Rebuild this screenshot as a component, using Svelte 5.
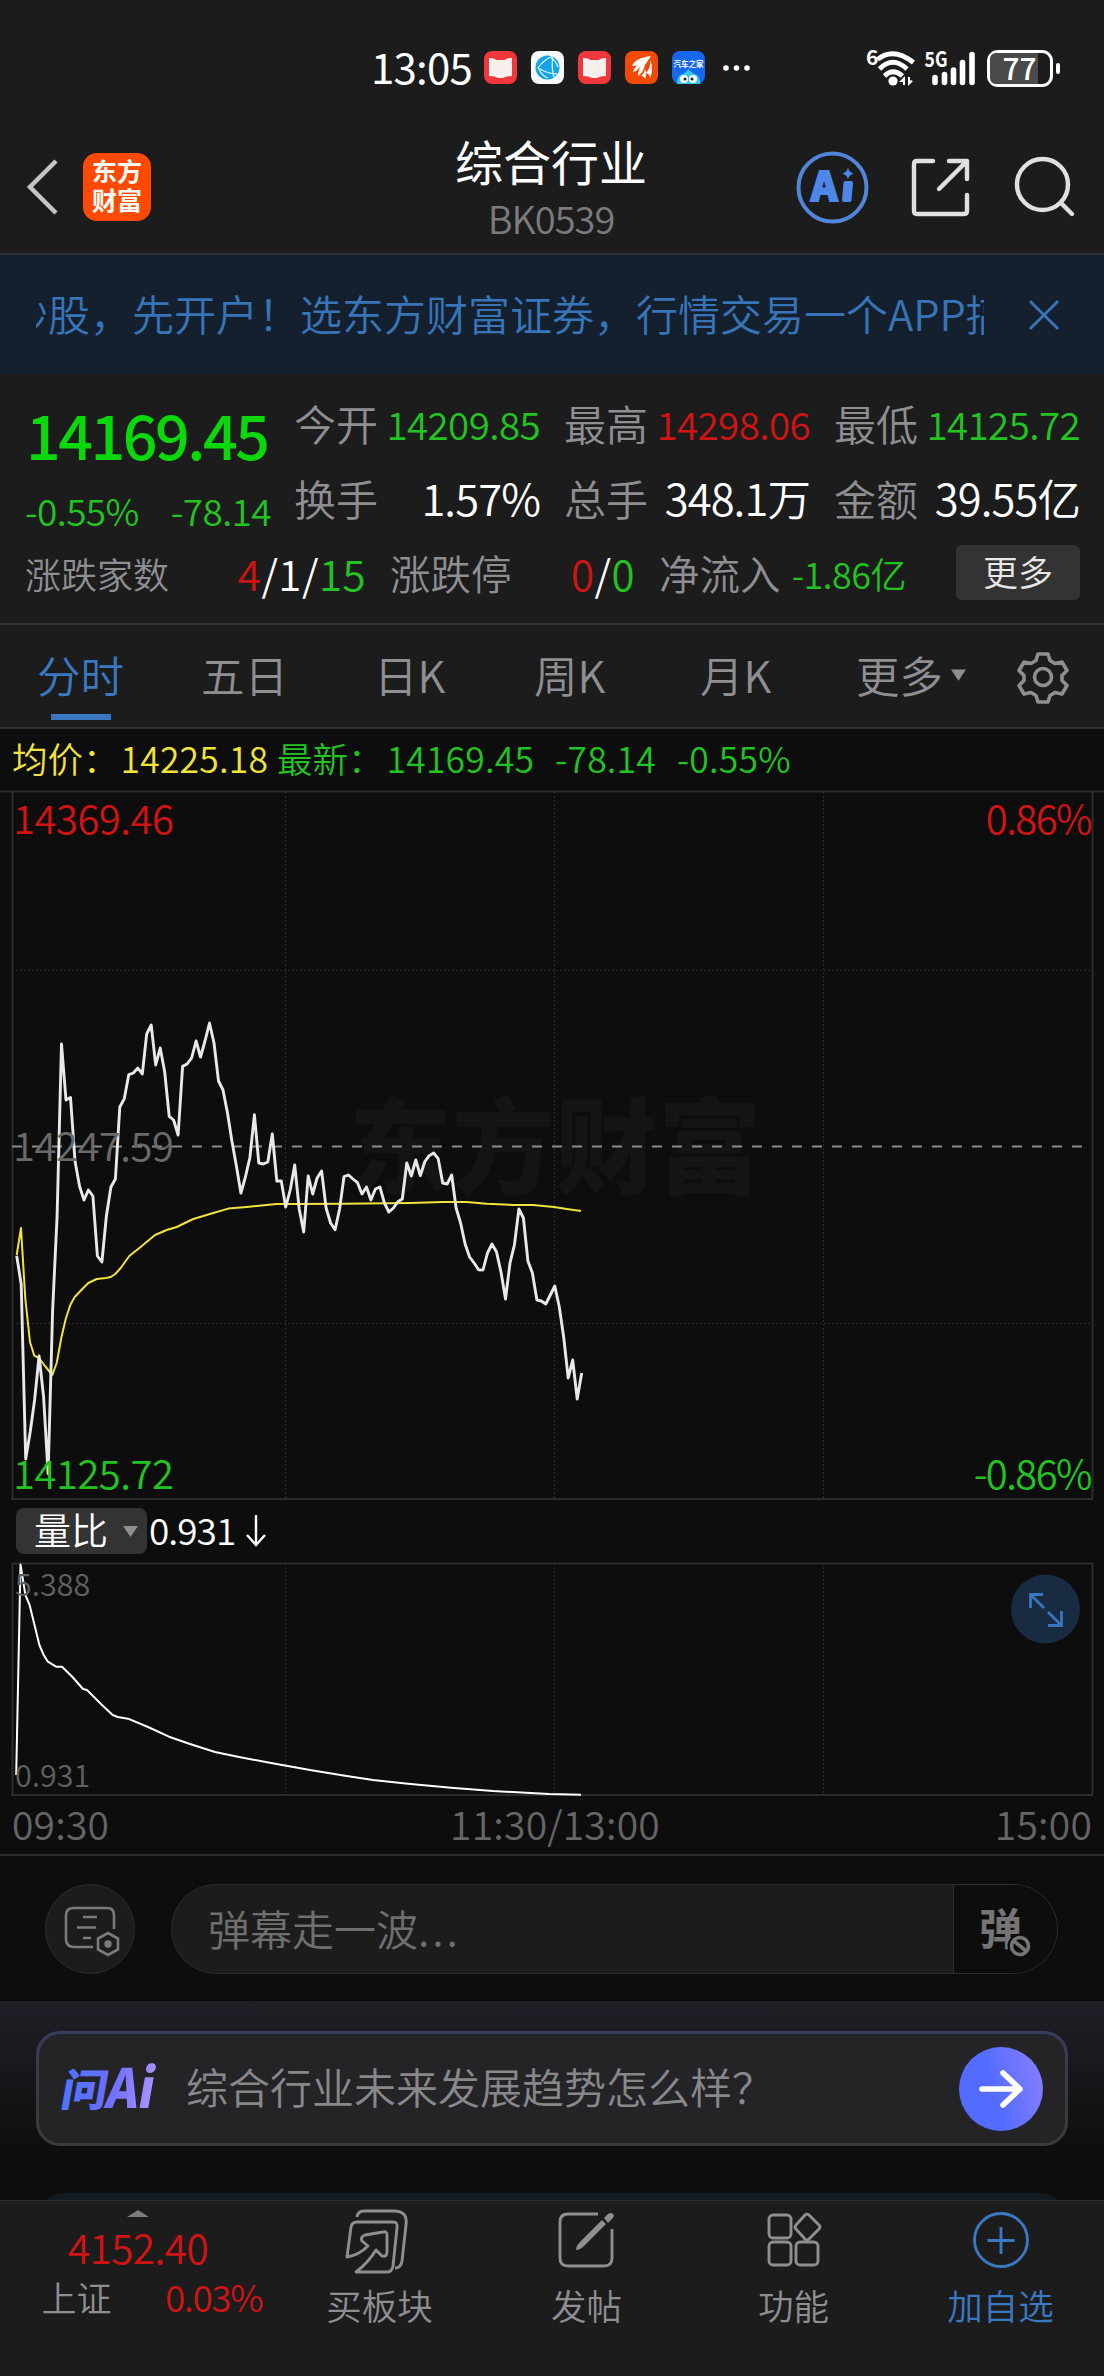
<script>
  const prices = [
    1255.7, 1284.3, 1459, 1432, 1400, 1356, 1397, 1473.6, 1311, 1216, 1044, 1100, 1097.5, 1161, 1186,
    1200, 1190, 1196, 1256, 1262, 1216, 1187, 1179, 1107, 1098.6, 1074.6, 1073, 1068, 1074, 1034,
    1025, 1065, 1048, 1072, 1116.4, 1120, 1135, 1066.4, 1064, 1058, 1041, 1057, 1041, 1023, 1043,
    1081, 1090, 1113, 1141, 1166, 1193, 1177, 1157.5, 1114.6, 1163, 1164, 1162, 1134, 1181, 1181,
    1207, 1190, 1165, 1209, 1232, 1176, 1194, 1178, 1171, 1208, 1223, 1229.7, 1209, 1176.7, 1175,
    1179, 1182.7, 1194, 1187, 1200, 1189, 1187, 1203, 1212, 1208, 1201.7, 1199, 1163, 1176, 1160,
    1175.7, 1161.7, 1155.7, 1153, 1158.7, 1183, 1184, 1175, 1208, 1223, 1244, 1257, 1263, 1269.7,
    1270, 1253, 1244, 1252, 1272, 1299, 1263, 1245, 1209, 1218, 1261, 1273, 1300, 1301, 1304, 1295,
    1286, 1307, 1338, 1378, 1360, 1399, 1373
  ];
  const step = 565 / (prices.length - 1);
  const priceLine = prices.map((y, i) => `${(16.7 + i * step).toFixed(1)},${y}`).join(' ');

  const averageLine =
    '16.7,1255 21,1228 25.3,1298.6 30,1342 34.3,1355.7 39,1358 45,1366 52.3,1375 56.7,1363 61.3,1338 65.7,1319 70.3,1305 74.7,1297 83.3,1288 88.3,1283 96.7,1279 106,1278 110.7,1277 115.3,1274 120.7,1268 129.3,1256 140,1247.5 155,1235 166.7,1230 176.7,1227 193.3,1219 213.3,1213 228.3,1208.6 246.7,1207 276.7,1204 298,1204 343,1203.7 410,1203 443,1202 466.7,1202 486.7,1203.7 513,1205 533,1205 554,1207 566.7,1209 581,1211';
  const ratioLine =
    '16.2,1775 20.5,1564.5 25.4,1595 29.6,1605 35,1627 39.4,1645 43.7,1655 47.9,1661.7 56,1666.7 62,1666.7 72.5,1677 83,1689 87,1690 102,1705 112.7,1715 117.6,1717 128,1718.7 148,1727 169,1736.7 190,1744 215,1752 239,1757 271,1763 310,1770 345,1775.7 373,1780 408,1783.7 451,1787.7 493,1791 549,1794 581,1794.7';

  const stats = [
    ['今开', '14209.85', 'green'],
    ['最高', '14298.06', 'red'],
    ['最低', '14125.72', 'green'],
    ['换手', '1.57%', 'white'],
    ['总手', '348.1万', 'white'],
    ['金额', '39.55亿', 'white']
  ];
  const tabs = ['分时', '五日', '日K', '周K', '月K'];
</script>

<div class="screen">
  <div class="status">
    <span class="clock">13:05</span>
    <div class="apps">
      <svg viewBox="0 0 33 33"><rect width="33" height="33" rx="8" fill="#f0383c" /><path d="M5 7q6 0 7 2h9q1-2 7-2v18q-6 0-9 2h-5q-3-2-9-2z" fill="#f6efec" /></svg>
      <svg viewBox="0 0 33 33"><rect width="33" height="33" rx="8" fill="#f6f8f9" /><circle cx="16.500" cy="16.500" r="12" fill="#14a4ea" /><path d="M22 5Q12 9 7 17q10 6 19 6M22 5q-2 12 1 21M8 18q3 7 9 9M20 7q5 3 7 9" fill="none" stroke="#dff4ff" stroke-width="1.300" /></svg>
      <svg viewBox="0 0 33 33"><rect width="33" height="33" rx="8" fill="#f0383c" /><path d="M5 7q6 0 7 2h9q1-2 7-2v18q-6 0-9 2h-5q-3-2-9-2z" fill="#f6efec" /></svg>
      <svg viewBox="0 0 33 33"><rect width="33" height="33" rx="8" fill="#f34a06" /><path d="M26 5Q10 7 7 15q6 0 10-4-7 3-9 10 5-1 9-8-4 6-4 12 5-3 7-11z" fill="#fff" /><path d="M25 9q1 8-4 13 4 1 4 5 4-9 0-18zM20 18q-1 5-4 7 3 0 4 3 2-5 0-10z" fill="#fff" /></svg>
      <svg viewBox="0 0 33 33"><rect width="33" height="33" rx="8" fill="#1767ee" /><text x="16.500" y="16" class="tiny">汽车之家</text><path d="M16.500 18q3 4 9 6 3 4 3 9H5q0-6 3-9 6-2 8.500-6z" fill="#35c3f2" /><circle cx="12" cy="28" r="4" fill="#fff" /><circle cx="21" cy="28" r="4" fill="#fff" /><circle cx="13" cy="28" r="1.500" fill="#123" /><circle cx="20" cy="28" r="1.500" fill="#123" /></svg>
    </div>
    <svg class="dots" viewBox="0 0 30 8"><circle cx="4" cy="4" r="2.800" /><circle cx="14.500" cy="4" r="2.800" /><circle cx="25" cy="4" r="2.800" /></svg>
    <svg class="signals" viewBox="866 44 196 46">
      <text x="866" y="64" class="mini">6</text>
      <g fill="none" stroke="#fff" stroke-width="4.800">
        <path d="M877.500 58.500q15.500-13 36 3" /><path d="M879.500 68q13-13.500 27.500 0" /><path d="M884.500 75q8.500-8.500 18 0" />
      </g>
      <circle cx="893" cy="80" r="4.600" fill="#fff" />
      <path d="M899 81l6-6v9h-2v-3zM913 80l-5 5v-9h2v3z" fill="#fff" />
      <text x="924.500" y="66" class="mini" textLength="23" lengthAdjust="spacingAndGlyphs">5G</text>
      <path d="M935 76.500v5M944.500 73.500v8M953.500 69v12.500M962.500 61.500v20M972 53.500v28" stroke="#fff" stroke-width="5.600" stroke-linecap="round" />
      <rect x="988.500" y="50.500" width="63" height="34" rx="9.500" fill="none" stroke="#fff" stroke-width="3" />
      <path d="M996 52h42v31h-42q-6 0-6-7V59q0-7 6-7z" fill="#4a4a4a" />
      <rect x="1056" y="62" width="4" height="11" rx="2" fill="#fff" />
      <text x="1002.500" y="79" class="battery" textLength="34" lengthAdjust="spacingAndGlyphs">77</text>
    </svg>
  </div>

  <header>
    <svg class="back" viewBox="0 0 31 56"><path d="M29 2L3 28l26 26" /></svg>
    <div class="logo"><span>东方</span><span>财富</span></div>
    <div class="title"><h1>综合行业</h1><p>BK0539</p></div>
    <svg class="actions" viewBox="790 140 296 94">
      <circle cx="832.500" cy="187.500" r="34" stroke="#5285da" stroke-width="4" fill="none" />
      <text x="811" y="201" class="ai">A</text>
      <path d="M848 183h3l-1.500 17h-5.500l1.500-17z" fill="#4e87ea" stroke="#4e87ea" stroke-width="4" stroke-linejoin="round" />
      <path d="M848 167.500q1 5 6 6-5 1-6 6-1-5-6-6 5-1 6-6z" fill="#4e87ea" />
      <g stroke="#e0e0e0" stroke-width="4.400" fill="none" stroke-linecap="round" stroke-linejoin="round">
        <path d="M933 161h-16q-3 0-3 3v47q0 3 3 3h47q3 0 3-3v-16M949 161h18v18M967 161l-28 28" />
        <circle cx="1042.500" cy="184.500" r="25.500" /><path d="M1061 203l11 11" />
      </g>
    </svg>
  </header>

  <div class="banner">
    <div class="marquee"><span>炒股，先开户！选东方财富证券，行情交易一个APP搞定</span></div>
    <svg viewBox="0 0 34 34"><path d="M2 2l30 30M32 2L2 32" /></svg>
  </div>

  <section class="quote">
    <div class="top">
      <div class="now">
        <div class="last">14169.45</div>
        <div class="change"><span>-0.55%</span><span>-78.14</span></div>
      </div>
      <div class="stats">
        {#each stats as [label, value, tone]}
          <div class="stat"><span>{label}</span><b class={tone}>{value}</b></div>
        {/each}
      </div>
    </div>
    <div class="breadth">
      <div class="homes"><span>涨跌家数</span><b><i class="red">4</i>/1/<i class="green">15</i></b></div>
      <div class="limits"><span>涨跌停</span><b><i class="red">0</i>/<i class="green">0</i></b></div>
      <div class="flow"><span>净流入</span><b class="green">-1.86亿</b></div>
      <button>更多</button>
    </div>
  </section>

  <nav class="tabs">
    {#each tabs as tab, i}
      <span class:active={i === 0}>{tab}</span>
    {/each}
    <span class="more">更多<svg viewBox="0 0 16 12"><path d="M0 0h16L8 12z" /></svg></span>
    <svg class="gear" viewBox="0 0 52 52">
      <path d="M21 3h10l2 6.500 5 3 7-1.500 5 8.500-5 5v5l5 5-5 8.500-7-1.500-5 3-2 6.500H21l-2-6.500-5-3-7 1.500-5-8.500 5-5v-5l-5-5L7 11l7 1.500 5-3z" /><circle cx="26" cy="26" r="8.500" />
    </svg>
  </nav>

  <div class="legend">
    <span class="avg">均价：<em>14225.18</em></span>
    <span class="latest">最新：<em>14169.45</em><em>-78.14</em><em>-0.55%</em></span>
  </div>

  <svg class="chart price" viewBox="0 791 1104 709">
    <text x="555" y="1186" class="watermark" textLength="412" lengthAdjust="spacingAndGlyphs">东方财富</text>
    <g class="grid"><path d="M285.500 792v707M554.500 792v707M823.500 792v707M12 970.500h1080M12 1323.500h1080" /></g>
    <path class="frame" d="M0 791.500h1104M12.500 792v707M1092.500 792v707M11 1499h1082" />
    <path d="M12 1146.500h1080" stroke="#8b8b8b" stroke-width="1.800" stroke-dasharray="10 10" />
    <polyline points={averageLine} stroke="#f2e23c" stroke-width="2" />
    <polyline points={priceLine} stroke="#e9e9e9" stroke-width="2.900" />
    <text x="13" y="834" class="red">14369.46</text>
    <text x="1091" y="834" class="red end percent">0.86%</text>
    <text x="13" y="1161" class="dim">14247.59</text>
    <text x="13" y="1489" class="green">14125.72</text>
    <text x="1091" y="1489" class="green end percent">-0.86%</text>
  </svg>

  <div class="indicator">
    <span class="pick">量比<svg viewBox="0 0 15 11"><path d="M0 0h15L7.500 11z" /></svg></span>
    <span class="ratio">0.931</span>
    <svg class="down" viewBox="0 0 20 32"><path d="M10 0v29M1 20l9 10 9-10" /></svg>
  </div>

  <svg class="chart volume" viewBox="0 1562 1104 294">
    <g class="grid"><path d="M285.500 1563v231M554.500 1563v231M823.500 1563v231" /></g>
    <path class="frame" d="M12 1563.500h1080M12.500 1563v232M1092.500 1563v232M11 1795h1082M0 1855h1104" />
    <polyline points={ratioLine} stroke="#fff" stroke-width="2" />
    <g class="small"><text x="15" y="1596">5.388</text><text x="15" y="1787">0.931</text></g>
    <circle cx="1045.500" cy="1609" r="34.500" fill="#182b42" />
    <path d="M1043 1594.500h-12.500V1608M1031 1595l13 13M1048 1612l13 13M1061.500 1611v14.500H1048" fill="none" stroke="#3a76bd" stroke-width="2.800" />
    <g class="time"><text x="12" y="1840">09:30</text><text x="555" y="1840" class="mid">11:30/13:00</text><text x="1092" y="1840" class="end">15:00</text></g>
  </svg>

  <div class="comment">
    <div class="round">
      <svg viewBox="62 1904 58 54" fill="none" stroke="#7b7b7b" stroke-width="2.600">
        <path d="M93 1947H74q-8 0-8-8v-24q0-7 8-7h33q7 0 7 7v14M83 1917h14M77 1927.500h19M83 1938h8" />
        <path d="M108 1933l10 5.500v11l-10 5.500-10-5.500v-11z" /><circle cx="108" cy="1944" r="2.400" fill="#7b7b7b" />
      </svg>
    </div>
    <div class="field"><span>弹幕走一波<i class="ellipsis">...</i></span><div class="toggle">弹<svg viewBox="0 0 26 26"><circle cx="13" cy="13" r="12.500" fill="#0d0d0d" /><circle cx="13" cy="13" r="8.500" fill="none" stroke="#757575" stroke-width="3.600" /><path d="M7 8l12 10" stroke="#757575" stroke-width="3.600" /></svg></div></div>
  </div>

  <section class="ask">
    <div class="card">
      <svg class="wen" viewBox="58 2062 104 52">
        <defs><linearGradient id="wen" gradientUnits="userSpaceOnUse" x1="0" y1="0" x2="92" y2="0"><stop offset="0" stop-color="#4f75ff" /><stop offset=".5" stop-color="#6a6dff" /><stop offset="1" stop-color="#ab93ff" /></linearGradient></defs>
        <g fill="url(#wen)" transform="translate(60 2106) skewX(-10)">
          <text x="-1" y="-1" class="wt" textLength="46" lengthAdjust="spacingAndGlyphs">问</text>
          <text x="44" y="1" class="wa" textLength="48" lengthAdjust="spacingAndGlyphs">Ai</text>
        </g>
      </svg>
      <span>综合行业未来发展趋势怎么样？</span>
      <div class="go"><svg viewBox="0 0 44 40"><path d="M3 20h37M24 4l17 16-17 16" /></svg></div>
    </div>
    <div class="peek"></div>
  </section>

  <footer>
    <div class="index">
      <svg viewBox="0 0 22 7"><path d="M0 7h22L11 0z" /></svg>
      <div class="points">4152.40</div>
      <div class="pair"><span>上证</span><b>0.03%</b></div>
    </div>
    <div class="item">
      <svg viewBox="0 0 70 66"><path d="M12 10q1-6 7-6h30q14 0 12 14l-4 36q-1 7-7 7" /><path d="M2 50L6 20q1-5 6-5h36q5 0 4 6l-4 38q-1 6-6 6H11q12-9 20-22l6 6q5 1 5-4V28q0-4-4-3l-18 3q-5 2-3 6l6 5q-9 9-21 11z" /></svg>
      <span>买板块</span>
    </div>
    <div class="item">
      <svg viewBox="0 0 70 66"><path d="M46 7H16q-8 0-8 8v36q0 8 8 8h36q8 0 8-8V22" /><path class="solid" d="M50 13l4 4-22 22q-4 4-8 4 0-4 4-8zM52 11l4-4q3-2 5 0t-1 5l-4 4z" /></svg>
      <span>发帖</span>
    </div>
    <div class="item">
      <svg viewBox="0 0 70 66"><rect x="10" y="8" width="22" height="23" rx="4" /><rect x="10" y="35" width="22" height="23" rx="4" /><rect x="37" y="35" width="22" height="23" rx="4" /><path d="M46 8q2-2 4 0l10 10q2 2 0 4L50 32q-2 2-4 0L37 22q-2-2 0-4z" /></svg>
      <span>功能</span>
    </div>
    <div class="item add">
      <svg viewBox="0 0 70 66"><circle cx="35" cy="33" r="26.500" /><path d="M35 20v27M21.500 33.500h27" /></svg>
      <span>加自选</span>
    </div>
  </footer>
</div>

<style>
  :global(body) { background: #0d0d0d; }
  .screen { width: 1104px; height: 2376px; overflow: hidden; background: #0d0d0d; color: #8f8f93; font-family: 'Noto Sans CJK SC', sans-serif; font-weight: 350; box-sizing: border-box; display: flex; flex-direction: column; }
  .screen > * { flex: none; box-sizing: border-box; }
  svg { display: block; flex: none; overflow: visible; }
  b, i, em { font-weight: inherit; font-style: normal; }
  .green { color: #22c322; fill: #22c322; }
  .red { color: #d01414; fill: #d01414; }
  .white { color: #fff; }

  .status { height: 115px; padding: 20px 42px 0 371px; background: #1c1c1c; display: flex; align-items: center; color: #fff; }
  .clock { width: 113px; font-size: 42px; font-weight: 400; letter-spacing: -.8px; line-height: 60px; padding-bottom: 4px; box-sizing: border-box; }
  .apps { display: flex; gap: 14px; }
  .apps svg { width: 33px; height: 33px; }
  .tiny { font-size: 7.500px; font-weight: 700; fill: #fff; text-anchor: middle; }
  .dots { width: 30px; height: 8px; margin-left: 17px; fill: #fff; }
  .signals { width: 196px; height: 46px; margin-left: auto; }
  .mini { font-size: 21px; font-weight: 700; fill: #fff; }
  .battery { font-size: 31px; font-weight: 500; fill: #fff; }

  header { height: 140px; background: #1c1c1c; border-bottom: 2px solid #303030; display: flex; align-items: flex-start; }
  .back { width: 31px; height: 56px; margin: 44px 25px 0 27px; fill: none; stroke: #c4c4c4; stroke-width: 4.500; }
  .logo { width: 68px; height: 68px; margin-top: 38px; border-radius: 14px; background: #ff4a03; color: #fff; font-size: 25px; font-weight: 700; line-height: 29px; text-align: center; display: flex; flex-direction: column; justify-content: center; padding-bottom: 4px; box-sizing: border-box; }
  .title { flex: 1; padding-left: 161px; text-align: center; }
  h1 { margin: 14px 0 0; color: #fff; font-size: 48px; line-height: 62px; font-weight: 400; white-space: nowrap; }
  .title p { margin: 4px 0 0; font-size: 38px; line-height: 46px; color: #7b7b7d; letter-spacing: -1px; }
  .actions { width: 296px; height: 94px; margin: 25px 18px 0 0; }
  .ai { font-size: 40px; font-weight: 900; fill: #4e87ea; stroke: #4e87ea; stroke-width: 2; }

  .banner { height: 119px; background: #14202e; display: flex; align-items: center; padding: 0 44px 0 36px; justify-content: space-between; }
  .marquee { width: 948px; overflow: hidden; white-space: nowrap; font-size: 42px; line-height: 60px; padding-bottom: 4px; color: #3874b8; }
  .marquee span { margin-left: -30px; }
  .banner svg { width: 32px; height: 32px; stroke: #3874b8; stroke-width: 3; }

  .quote { height: 251px; padding: 11px 24px 0 25px; background: #1c1c1c; border-bottom: 2px solid #333; }
  .top { display: flex; height: 150px; }
  .now { width: 269px; color: #22c322; }
  .last { font-size: 61px; line-height: 97px; height: 99px; font-weight: 500; color: #0ad80a; letter-spacing: -2.500px; padding-left: 1px; }
  .change { width: 246px; display: flex; justify-content: space-between; font-size: 37px; line-height: 52px; letter-spacing: -.6px; }
  .stats { display: grid; grid-template-columns: repeat(3, 246px); grid-auto-rows: 75px; column-gap: 24px; }
  .stat { display: flex; justify-content: space-between; align-items: center; font-size: 42px; line-height: 60px; white-space: nowrap; }
  .stat b { font-size: 38.500px; letter-spacing: -.6px; }
  .stat b.white { font-size: 43.500px; letter-spacing: -.9px; }
  .breadth { display: flex; align-items: center; height: 75px; white-space: nowrap; line-height: 60px; }
  .breadth > div { display: flex; justify-content: space-between; align-items: center; }
  .homes { width: 341px; font-size: 36px; margin-right: 24px; }
  .limits { width: 245px; font-size: 40.500px; margin-right: 24px; }
  .homes b, .limits b { font-size: 42px; color: #fff; letter-spacing: .5px; }
  .flow { width: 247px; font-size: 40.500px; }
  .flow b { font-size: 36px; letter-spacing: -.5px; }
  .breadth button { margin-left: auto; width: 124px; height: 55px; border: 0; border-radius: 6px; background: #333; color: #e8e8e8; font: inherit; font-size: 35px; line-height: 50px; padding: 0 0 3px; }

  .tabs { height: 104px; padding-left: 37px; background: #1c1c1c; border-bottom: 2px solid #303030; display: grid; grid-template-columns: 164px 173px 160px 166px 156px 161px 52px; align-items: center; font-size: 43.500px; line-height: 100px; }
  .active { color: #3a78c2; background: linear-gradient(#3a78c2, #3a78c2) 14px 89px / 60px 6px no-repeat; }
  .tabs span { padding-bottom: 3px; }
  .more { display: flex; align-items: center; }
  .more svg { width: 15px; height: 12px; margin-left: 8px; fill: #8f8f93; }
  .gear { width: 52px; height: 52px; fill: none; stroke: #8f8f93; stroke-width: 3.600; stroke-linejoin: round; }

  .legend { height: 62px; padding: 0 12px 4px; display: flex; align-items: center; font-size: 35.500px; line-height: 56px; white-space: nowrap; }
  .legend em { letter-spacing: .2px; margin-right: 21px; }
  .avg { width: 265px; color: #f2e23c; }
  .avg em { margin-left: 2px; }
  .latest { color: #22c322; }
  .latest em:first-of-type { margin-left: 3px; }

  .chart { width: 1104px; }
  .price { height: 709px; font-size: 40px; letter-spacing: -.5px; }
  .percent { letter-spacing: -1.600px; }
  .volume { height: 294px; }
  polyline { fill: none; stroke-linejoin: round; }
  .grid { stroke: #2b2b2b; stroke-width: 1.200; stroke-dasharray: 2 2; }
  .frame { stroke: #2c2c2c; stroke-width: 2; fill: none; }
  .watermark { font-size: 104px; font-weight: 900; fill: #141414; text-anchor: middle; letter-spacing: 0; }
  .dim { fill: #6a6a6a; }
  .end { text-anchor: end; }
  .mid { text-anchor: middle; }
  .small { fill: #606060; font-size: 30.500px; }
  .time { fill: #656565; font-size: 39px; letter-spacing: .2px; }

  .indicator { height: 62px; padding: 0 16px; display: flex; align-items: center; color: #fff; font-size: 37px; line-height: 46px; }
  .pick { width: 131px; height: 46px; box-sizing: border-box; border-radius: 8px; background: #333; padding: 0 9px 4px 18px; display: flex; align-items: center; justify-content: space-between; line-height: 40px; }
  .pick svg { width: 15px; height: 11px; fill: #909090; margin-top: 4px; }
  .ratio { margin-left: 2px; line-height: 42px; padding-bottom: 4px; letter-spacing: -1px; }
  .down { width: 20px; height: 32px; margin-left: 11px; fill: none; stroke: #fff; stroke-width: 2.400; }

  .comment { height: 145px; padding: 28px 46px 0 45px; display: flex; justify-content: space-between; }
  .round { width: 90px; height: 90px; box-sizing: border-box; border: 1px solid #2c2c2c; border-radius: 50%; background: #1c1c1c; display: flex; align-items: center; justify-content: center; }
  .round svg { width: 58px; height: 54px; margin-top: 3px; margin-left: 2px; }
  .field { width: 887px; height: 90px; box-sizing: border-box; border: 1px solid #2c2c2c; border-radius: 45px; background: #1c1c1c; overflow: hidden; display: flex; align-items: center; justify-content: space-between; padding-left: 36px; font-size: 42px; color: #6f6f6f; }
  .field > span { padding-bottom: 4px; }
  .ellipsis { letter-spacing: 3px; }
  .toggle { width: 104px; height: 90px; box-sizing: border-box; border-left: 1px solid #2c2c2c; background: #0d0d0d; color: #757575; display: flex; align-items: center; padding-left: 25px; font-size: 43px; font-weight: 700; line-height: 80px; padding-bottom: 7px; }
  .toggle svg { width: 26px; height: 26px; margin: 40px 0 0 -15px; }

  .ask { height: 199px; padding: 30px 36px 0; background: linear-gradient(#201f27, #0d0d0d 80%); overflow: hidden; }
  .card { height: 115px; box-sizing: border-box; border: 3px solid transparent; border-radius: 24px; background: linear-gradient(#242427, #242427) padding-box, linear-gradient(#393c5c, #3c3a3c 80%) border-box; display: flex; align-items: center; padding: 0 22px 0 19px; font-size: 42px; color: #88888b; }
  .card > span { padding-bottom: 6px; margin-left: 24px; flex: 1; }
  .wen { width: 104px; height: 52px; }
  .wt { font-size: 44px; font-weight: 900; }
  .wa { font-size: 54px; font-weight: 900; }
  .go { width: 84px; height: 84px; border-radius: 50%; background: linear-gradient(75deg, #536bff 40%, #8b80ff); display: flex; align-items: center; justify-content: center; }
  .go svg { width: 44px; height: 40px; fill: none; stroke: #fff; stroke-width: 5.500; stroke-linecap: round; stroke-linejoin: round; }
  .peek { margin-top: 47px; height: 60px; border-radius: 28px; background: #121a22; }

  footer { height: 176px; border-top: 1px solid #2e2e2e; background: #1c1c1c; display: grid; grid-template-columns: 276px repeat(4, 207px); }
  .index { display: flex; flex-direction: column; align-items: center; padding-top: 9px; }
  .index svg { width: 22px; height: 7px; fill: #7d7d80; }
  .points { color: #d01414; font-size: 40.500px; line-height: 58px; margin-top: 1px; letter-spacing: -.6px; }
  .pair { width: 221px; margin-left: 28px; display: flex; justify-content: space-between; align-items: center; font-size: 35px; line-height: 42px; }
  .pair b { color: #d01414; font-size: 36.500px; letter-spacing: -1.200px; }
  .item { display: flex; flex-direction: column; align-items: center; font-size: 35.500px; line-height: 50px; }
  .item svg { width: 70px; height: 66px; margin: 6px 0 7px; fill: none; stroke: #8f8f93; stroke-width: 2.900; stroke-linejoin: round; }
  .item .solid { fill: #8f8f93; stroke: none; }
  .add { color: #3a78c2; }
  .item.add svg { stroke: #3a78c2; }
</style>
